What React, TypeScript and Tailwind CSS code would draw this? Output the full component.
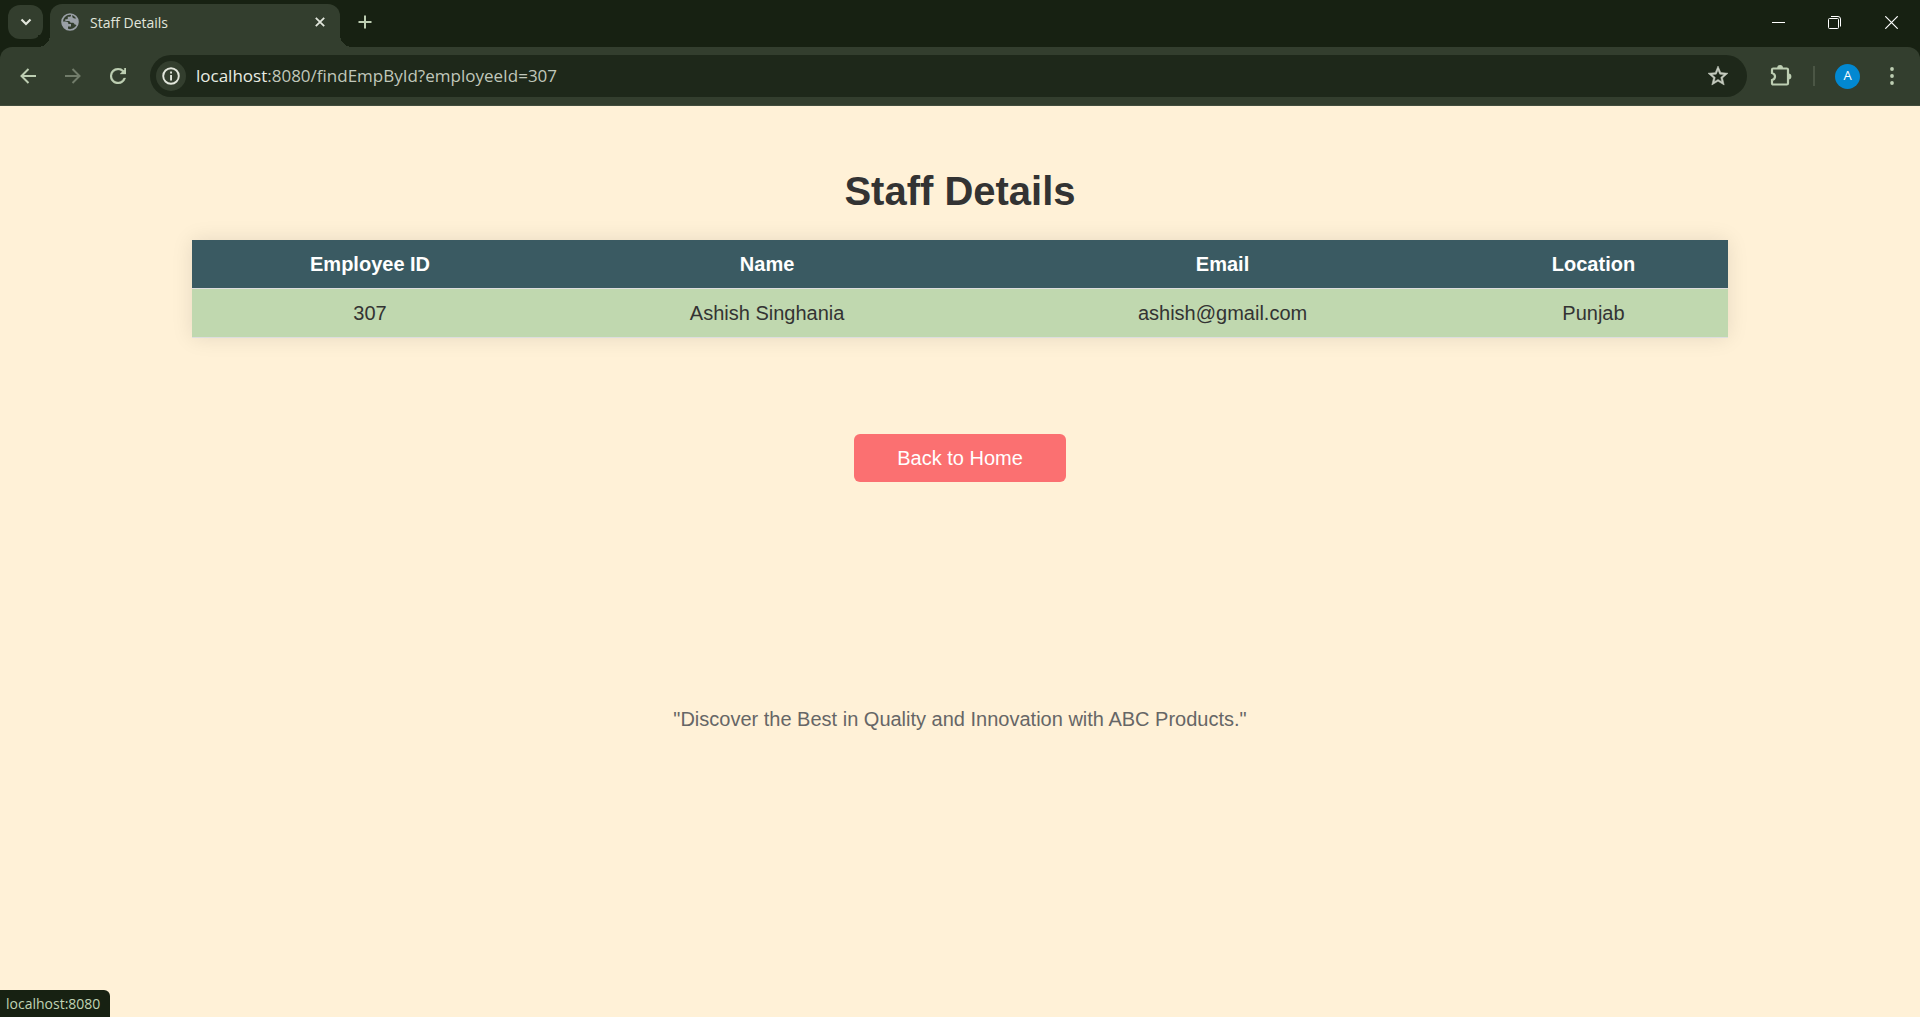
import React from "react";

type IconButtonProps = {
  label: string;
  className: string;
  children: React.ReactNode;
};

function IconButton({ label, className, children }: IconButtonProps) {
  return (
    <button
      type="button"
      aria-label={label}
      className={`flex shrink-0 items-center justify-center ${className}`}
    >
      {children}
    </button>
  );
}

function GlobeIcon() {
  return (
    <svg viewBox="0 0 18 18" className="size-[18px] shrink-0" aria-hidden="true">
      <circle cx="9" cy="9" r="8" fill="none" stroke="#9aa0a6" strokeWidth="1.6" />
      <path
        fill="#9aa0a6"
        d="M1 8.5h3.4c1.9 0 3 .8 3 2.4h2.6v2.6H7v3.3A8 8 0 0 1 1 8.500ZM10 1.100v1.100c0 .9-.7 1.600-1.600 1.600H6.800v1.700c0 .5-.4.8-.8.800H4.300V8h3.300c1 0 1.800.8 1.800 1.700h2.200c1 0 1.500.6 1.800 1.300.4.8 1.200 1 2.600.9a8 8 0 0 0 1-3.900c0-1.300-.3-2.500-.9-3.500-.5.7-1.200 1-2.300 1-1.500 0-2.500-.9-2.500-2.200V1.200Z"
      />
    </svg>
  );
}

function TabStrip() {
  return (
    <div className="flex h-[47px] items-end bg-[#172112]">
      <IconButton
        label="Search tabs"
        className="mb-2 ml-2 h-[34px] w-[35px] rounded-xl bg-[#333e2e]"
      >
        <svg viewBox="0 0 12 8" className="h-2 w-3" fill="none" stroke="#e2e6dc" strokeWidth="2.2" aria-hidden="true">
          <path d="M1.500 1.500 6 6l4.500-4.500" />
        </svg>
      </IconButton>

      <div className="relative ml-[7px] flex h-[43px] w-[290px] items-center rounded-t-xl bg-[#333e2e] pr-[10px] pb-[7px] pl-[11px]">
        <span className="absolute bottom-0 -left-3 size-3 bg-[radial-gradient(circle_at_0_0,#172112_12px,#333e2e_12px)]" />
        <span className="absolute -right-3 bottom-0 size-3 bg-[radial-gradient(circle_at_100%_0,#172112_12px,#333e2e_12px)]" />
        <GlobeIcon />
        <span className="ml-[11px] flex-1 text-[14px] text-[#e2e6dc]">Staff Details</span>
        <IconButton label="Close tab" className="size-5">
          <svg viewBox="0 0 10 10" className="size-[10px]" fill="none" stroke="#e2e6dc" strokeWidth="1.800" aria-hidden="true">
            <path d="m.8.8 8.400 8.400M9.200.8.8 9.200" />
          </svg>
        </IconButton>
      </div>

      <IconButton label="New tab" className="mb-[10px] ml-[10px] size-[30px]">
        <svg viewBox="0 0 14 14" className="size-[14px]" fill="none" stroke="#bdceb2" strokeWidth="2" aria-hidden="true">
          <path d="M7 .5v13M.5 7h13" />
        </svg>
      </IconButton>

      <div className="ml-auto flex self-stretch pb-[3px]">
        <IconButton label="Minimize" className="w-14">
          <svg viewBox="0 0 13 13" className="size-[13px]" stroke="#fff" aria-hidden="true">
            <path d="M0 6.500h13" />
          </svg>
        </IconButton>
        <IconButton label="Restore" className="w-14">
          <svg viewBox="0 0 13 13" className="size-[13px]" fill="none" stroke="#fff" aria-hidden="true">
            <rect x=".5" y="2.500" width="10" height="10" rx="1" />
            <path d="M3 .5h7a2.500 2.500 0 0 1 2.500 2.500v7.500" />
          </svg>
        </IconButton>
        <IconButton label="Close window" className="w-[58px]">
          <svg viewBox="0 0 13 13" className="size-[13px]" fill="none" stroke="#fff" strokeWidth="1.200" aria-hidden="true">
            <path d="m.3.3 12.400 12.400M12.700.3.3 12.700" />
          </svg>
        </IconButton>
      </div>
    </div>
  );
}

function Toolbar() {
  return (
    <div className="bg-[#172112]">
      <div className="flex h-[59px] items-center rounded-t-xl border-b border-[#424d3d] bg-[#333e2e] pl-[5px]">
        <IconButton label="Back" className="w-[45px]">
          <svg viewBox="0 0 16 16" className="size-4" fill="none" stroke="#bdceb2" strokeWidth="2" aria-hidden="true">
            <path d="M16 8H2M8.500 1 1.500 8l7 7" />
          </svg>
        </IconButton>
        <IconButton label="Forward" className="w-[45px]">
          <svg viewBox="0 0 16 16" className="size-4" fill="none" stroke="#717c6a" strokeWidth="2" aria-hidden="true">
            <path d="M0 8h14M7.500 1l7 7-7 7" />
          </svg>
        </IconButton>
        <IconButton label="Reload" className="w-[45px]">
          <svg viewBox="4 4 16 16" className="size-4" fill="#bdceb2" stroke="#bdceb2" strokeWidth=".3" aria-hidden="true">
            <path d="M17.650 6.350A7.960 7.960 0 0 0 12 4a8 8 0 1 0 7.730 10h-2.080A6 6 0 1 1 12 6c1.660 0 3.140.69 4.220 1.780L14 10h6V4h-1.700v1.700Z" />
          </svg>
        </IconButton>

        <div className="ml-[10px] flex h-[42px] flex-1 items-center rounded-full bg-[#1e281a] pr-[17px] pl-[6px]">
          <IconButton label="View site information" className="size-[30px] rounded-full bg-[#333e2e]">
            <svg viewBox="0 0 18 18" className="size-[18px]" aria-hidden="true">
              <circle cx="9" cy="9" r="7.800" fill="none" stroke="#e2e6dc" strokeWidth="1.900" />
              <path d="M8.100 4.600h1.900v1.900H8.100ZM8.100 8h1.900v5.400H8.100Z" fill="#e2e6dc" />
            </svg>
          </IconButton>
          <a
            href="http://localhost:8080/findEmpById?employeeId=307"
            className="ml-[10px] flex-1 text-[17px] leading-6 text-[#c0c7ba]"
          >
            <span className="text-[#e9ede4]">localhost</span>:8080/findEmpById?employeeId=307
          </a>
          <IconButton label="Bookmark this tab" className="size-6">
            <svg viewBox="2 2 20 20" className="size-5" fill="#c6ccc0" stroke="#c6ccc0" strokeWidth=".5" aria-hidden="true">
              <path d="m22 9.240-7.190-.62L12 2 9.190 8.630 2 9.240l5.460 4.730L5.820 21 12 17.270 18.180 21l-1.630-7.030ZM12 15.400l-3.760 2.270 1-4.280-3.320-2.880 4.380-.38L12 6.100l1.710 4.040 4.380.38-3.320 2.880 1 4.280Z" />
            </svg>
          </IconButton>
        </div>

        <IconButton label="Extensions" className="ml-[22px] size-6">
          <svg viewBox="0 0 24 24" className="size-6" aria-hidden="true">
            <path
              d="M4.200 4.500h13.600c.7 0 1.200.5 1.200 1.200v13.600c0 .7-.5 1.200-1.200 1.200H4.200c-.7 0-1.200-.5-1.200-1.200V16c1.900-.5 3-1.800 3-3.500S4.900 9.500 3 9V5.700c0-.7.5-1.200 1.200-1.200Z"
              fill="none"
              stroke="#bdceb2"
              strokeWidth="2.200"
            />
            <path d="M8.200 4a2.900 2.900 0 0 1 5.800 0ZM19.500 9.600a2.900 2.900 0 0 1 0 5.800Z" fill="#bdceb2" />
          </svg>
        </IconButton>
        <span className="ml-[20px] h-5 w-[2px] bg-[#4b5645]" />
        <IconButton
          label="Profile"
          className="ml-[20px] size-[25px] rounded-full bg-[#0288d1] text-[13px] text-white"
        >
          A
        </IconButton>
        <IconButton label="Browser menu" className="mr-4 ml-[19px] size-[25px]">
          <svg viewBox="0 0 4 18" className="h-[18px] w-1" fill="#bdceb2" aria-hidden="true">
            <circle cx="2" cy="2" r="1.900" />
            <circle cx="2" cy="9" r="1.900" />
            <circle cx="2" cy="16" r="1.900" />
          </svg>
        </IconButton>
      </div>
    </div>
  );
}

const columns = ["Employee ID", "Name", "Email", "Location"];
const staff = [["307", "Ashish Singhania", "ashish@gmail.com", "Punjab"]];

function StaffPage() {
  return (
    <main className="flex flex-1 flex-col items-center bg-[#fff1d7] pt-[62px] font-['Liberation_Sans',Arial,sans-serif] text-[20px] leading-6 text-[#333]">
      <h1 className="text-[40px] leading-[46px] font-bold">Staff Details</h1>
      <table className="mt-[26px] w-4/5 border-collapse text-center shadow-[0_0_20px_rgba(0,0,0,0.1)]">
        <thead>
          <tr className="bg-[#3a5a62] text-white">
            {columns.map((column) => (
              <th key={column} scope="col" className="border-b border-[#ddd] px-[15px] py-3 font-bold">
                {column}
              </th>
            ))}
          </tr>
        </thead>
        <tbody>
          {staff.map((row) => (
            <tr key={row[0]} className="bg-[#c0d8af]">
              {row.map((cell) => (
                <td key={cell} className="border-b border-[#ddd] px-[15px] py-3">
                  {cell}
                </td>
              ))}
            </tr>
          ))}
        </tbody>
      </table>
      <a
        href="http://localhost:8080"
        className="mt-24 flex h-12 w-[212px] items-center justify-center rounded-md bg-[#fb7071] text-white"
      >
        Back to Home
      </a>
      <p className="mt-[225px] text-[#666]">
        "Discover the Best in Quality and Innovation with ABC Products."
      </p>
    </main>
  );
}

export default function App() {
  return (
    <div className="relative flex min-h-screen flex-col font-['Open_Sans','Noto_Sans',sans-serif]">
      <TabStrip />
      <Toolbar />
      <StaffPage />
      <div className="absolute bottom-0 left-0 h-[27px] w-[110px] rounded-tr-md bg-[#172112] pl-[6px] text-[14px] leading-[27px] text-[#c0d3b4]">
        localhost:8080
      </div>
    </div>
  );
}
